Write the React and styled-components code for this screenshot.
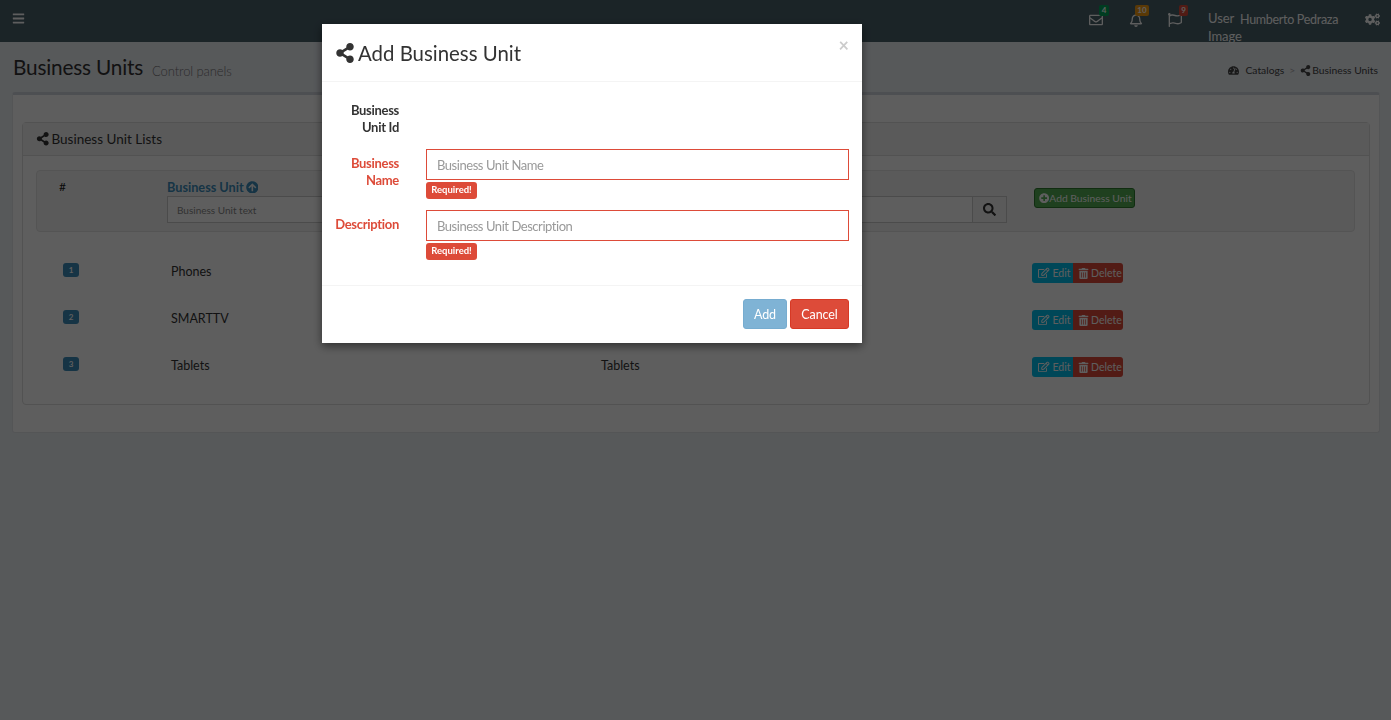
import React from "react";
import styled, { createGlobalStyle } from "styled-components";
import {
  FaBars, FaRegEnvelope, FaRegBell, FaRegFlag, FaCogs, FaTachometerAlt, FaShareAlt,
  FaSearch, FaPlusCircle, FaRegEdit, FaTrashAlt, FaArrowCircleUp,
} from "react-icons/fa";

const Global = createGlobalStyle`
  html, body { margin: 0; padding: 0; height: 100%; }
  body { background: #ecf0f5; font-family: "Lato", "Open Sans", sans-serif; font-size: 14px; color: #333; overflow: hidden; }
  * { box-sizing: border-box; }
`;

const Page = styled.div`height: 720px; display: flex; flex-direction: column;`;

const Header = styled.header`
  height: 42px; flex: none; background: #4a626b; display: flex; align-items: flex-start; color: #fff;
  padding-left: 12px; padding-right: 11px;
`;
const Burger = styled.span`display: flex; margin-top: 12px; font-size: 13px; color: #fff;`;
const HeaderRight = styled.div`margin-left: auto; display: flex; align-items: flex-start;`;
const NotifyIcon = styled.span`
  position: relative; display: flex; width: 14px; font-size: 14px; margin-top: 13px; margin-right: ${p => p.$gap}px; color: #fff;
`;
const Count = styled.span`
  position: absolute; top: -8px; left: ${p => p.$left}px; height: 11px; min-width: ${p => p.$w}px; padding: 0 2px; border-radius: 2px;
  font-size: 8px; line-height: 11px; font-weight: 700; text-align: center; color: #fff; background: ${p => p.$bg};
`;
const UserImage = styled.span`width: 34px; margin-top: 9px; line-height: 18px; font-size: 13px; letter-spacing: -0.1px; color: #fff;`;
const UserName = styled.span`margin-left: -2px; margin-top: 11px; width: 125px; font-size: 12.5px; line-height: 18px; letter-spacing: -0.3px; color: #fff;`;
const Cogs = styled.span`display: flex; margin-top: 12px; font-size: 15px; color: #fff;`;

const ContentHeader = styled.div`height: 50px; flex: none; display: flex; align-items: flex-start; padding: 0 13px;`;
const Title = styled.h1`margin: 11px 0 0; font-size: 20.8px; line-height: 28px; font-weight: 400; color: #333; letter-spacing: -0.2px;`;
const Subtitle = styled.small`margin: 21px 0 0 9px; font-size: 13px; line-height: 16px; font-weight: 300; color: #777; letter-spacing: -0.1px;`;
const Crumbs = styled.div`margin: 21px 0 0 auto; display: flex; align-items: center; gap: 5px; font-size: 10.3px; line-height: 14px; color: #444;`;
const CrumbIcon = styled.span`display: flex; font-size: 11px; margin-right: ${p => p.$gap || 0}px;`;
const CrumbLink = styled.span`display: flex; align-items: center; gap: 1px;`;
const CrumbSep = styled.span`color: #aaa;`;

const Box = styled.section`
  margin: 0 11px 0 12px; height: 341px; flex: none; background: #fff; border: 1px solid #e4e6ea; border-top: 3px solid #d2d6de;
  border-radius: 3px; padding: 27px 9px 0;
`;
const Panel = styled.div`height: 283px; border: 1px solid #ddd; border-radius: 4px;`;
const PanelHeading = styled.div`
  height: 33px; background: #f5f5f5; border-bottom: 1px solid #ddd; padding-left: 13px; display: flex; align-items: center; gap: 2px;
  font-size: 13.5px; color: #333;
`;
const PanelBody = styled.div`padding: 14px 14px 0 13px;`;
const Well = styled.div`
  height: 62px; background: #f5f5f5; border: 1px solid #e3e3e3; border-radius: 4px; display: grid; grid-template-columns: 130px 434px 431px 1fr;
`;
const Hash = styled.div`padding: 7px 0 0 22px; font-weight: 400; font-size: 12px; line-height: 18px; color: #222;`;
const FilterCol = styled.div`display: flex; flex-direction: column; padding-top: 7px;`;
const FilterTitle = styled.div`display: flex; align-items: center; gap: 2px; height: 18px; font-size: 12.7px; font-weight: 700; color: #3c8dbc;`;
const FilterInput = styled.div`
  height: 27px; width: 420px; border: 1px solid #ccc; background: #fff; padding-left: 9px; display: flex; align-items: center;
  font-size: 10px; color: #888;
`;
const SearchGroup = styled.div`display: flex; margin-top: 25px; height: 27px; width: 406px;`;
const SearchField = styled.div`flex: 1; border: 1px solid #ccc; background: #fff;`;
const SearchButton = styled.div`
  width: 34px; border: 1px solid #ccc; border-left: 0; background: #f4f4f4; display: flex; align-items: center; justify-content: center;
  font-size: 13px; color: #333;
`;
const AddCol = styled.div`padding: 17px 0 0 2px;`;
const AddButton = styled.div`
  width: 101px; height: 20px; background: #54ae54; border: 1px solid #2f7a2f; border-radius: 3px; display: flex; align-items: center; padding-left: 4px; gap: 0;
  font-size: 10.3px; white-space: nowrap; color: #fff;
`;
const Rows = styled.div`padding-top: 22px;`;
const Row = styled.div`height: 47px; display: grid; grid-template-columns: 130px 430px 436px 1fr;`;
const Badge = styled.span`
  margin: 9px 0 0 27px; width: 16px; height: 14px; border-radius: 3px; background: #3c8dbc; color: #fff; font-size: 8px; font-weight: 700;
  display: flex; align-items: center; justify-content: center;
`;
const Cell = styled.div`padding: 9px 0 0 5px; font-size: 12.5px; line-height: 18px; color: #333;`;
const Actions = styled.div`padding-top: 9px; display: flex;`;
const EditButton = styled.div`
  height: 20px; width: 41px; background: #00c0ef; border-radius: 3px 0 0 3px; display: flex; align-items: center; padding-left: 6px; gap: 3px; font-size: 10.5px; color: #fff;
  svg { font-size: 11.5px; flex: none; }
`;
const DeleteButton = styled.div`
  height: 20px; width: 50px; background: #dd4b39; border-radius: 0 3px 3px 0; display: flex; align-items: center; padding-left: 5px; gap: 2px; font-size: 10.5px; color: #fff;
  svg { font-size: 11px; flex: none; }
`;

const Backdrop = styled.div`position: fixed; inset: 0; background: rgba(0,0,0,.63); z-index: 10;`;
const Modal = styled.div`
  position: fixed; z-index: 11; top: 24px; left: 322px; width: 540px; height: 319px; background: #fff; box-shadow: 0 3px 9px rgba(0,0,0,.5);
  display: flex; flex-direction: column;
`;
const ModalHeader = styled.div`
  height: 58px; flex: none; border-bottom: 1px solid #f4f4f4; display: flex; align-items: center; padding: 0 13px; position: relative;
`;
const ModalTitle = styled.h4`
  margin: 0; display: flex; align-items: center; gap: 3px; font-size: 20.4px; line-height: 28px; font-weight: 400; color: #333;
  svg { font-size: 20px; flex: none; }
`;
const Close = styled.span`
  position: absolute; top: 10px; right: 13px; font-size: 18px; line-height: 22px; font-weight: 700; color: #ccc;
`;
const ModalBody = styled.div`flex: 1; padding: 14px 13px 0 0;`;
const Field = styled.div`display: grid; grid-template-columns: 77px 1fr; column-gap: 27px; margin-bottom: ${p => p.$mb}px;`;
const Label = styled.label`
  text-align: right; font-weight: 700; font-size: 13px; line-height: 17px; padding: 6px 0 0 10px; letter-spacing: -0.3px; color: ${p => (p.$error ? "#dd4b39" : "#333")};
`;
const Input = styled.div`
  height: 31px; border: 1px solid #dd4b39; display: flex; align-items: center; padding-left: 10px; font-size: 13px; letter-spacing: -0.45px; color: #999;
`;
const Required = styled.span`
  display: block; margin-top: 2px; width: 51px; height: 17px; border-radius: 3px; background: #dd4b39; color: #fff; font-size: 9.5px; font-weight: 700;
  line-height: 16px; text-align: center;
`;
const ModalFooter = styled.div`
  height: 58px; flex: none; border-top: 1px solid #f4f4f4; display: flex; justify-content: flex-end; align-items: flex-start; gap: 3px; padding: 13px 13px 0 0;
`;
const Button = styled.div`
  height: 30px; width: ${p => p.$w}px; border-radius: 3px; display: flex; align-items: center; justify-content: center; font-size: 12.5px; letter-spacing: -0.1px; color: #fff;
  background: ${p => p.$bg}; border: 1px solid ${p => p.$border};
`;

const rows = [
  ["1", "Phones", "Phones"],
  ["2", "SMARTTV", "SMARTTV"],
  ["3", "Tablets", "Tablets"],
];

export default function App() {
  return (
    <Page>
      <Global />
      <Header>
        <Burger><FaBars /></Burger>
        <HeaderRight>
          <NotifyIcon $gap={26}><FaRegEnvelope /><Count $left={10} $w={10} $bg="#00a65a">4</Count></NotifyIcon>
          <NotifyIcon $gap={25}><FaRegBell /><Count $left={6} $w={14} $bg="#f39c12">10</Count></NotifyIcon>
          <NotifyIcon $gap={26}><FaRegFlag /><Count $left={11} $w={9} $bg="#dd4b39">9</Count></NotifyIcon>
          <UserImage>User Image</UserImage>
          <UserName>Humberto Pedraza</UserName>
          <Cogs><FaCogs /></Cogs>
        </HeaderRight>
      </Header>
      <ContentHeader>
        <Title>Business Units</Title>
        <Subtitle>Control panels</Subtitle>
        <Crumbs>
          <CrumbLink><CrumbIcon $gap={5}><FaTachometerAlt /></CrumbIcon>Catalogs</CrumbLink>
          <CrumbSep>&gt;</CrumbSep>
          <CrumbLink><CrumbIcon><FaShareAlt /></CrumbIcon>Business Units</CrumbLink>
        </Crumbs>
      </ContentHeader>
      <Box>
        <Panel>
          <PanelHeading><FaShareAlt />Business Unit Lists</PanelHeading>
          <PanelBody>
            <Well>
              <Hash>#</Hash>
              <FilterCol>
                <FilterTitle>Business Unit <FaArrowCircleUp /></FilterTitle>
                <FilterInput>Business Unit text</FilterInput>
              </FilterCol>
              <SearchGroup>
                <SearchField />
                <SearchButton><FaSearch /></SearchButton>
              </SearchGroup>
              <AddCol>
                <AddButton><FaPlusCircle />Add Business Unit</AddButton>
              </AddCol>
            </Well>
            <Rows>
              {rows.map(([n, name, desc]) => (
                <Row key={n}>
                  <Badge>{n}</Badge>
                  <Cell>{name}</Cell>
                  <Cell>{desc}</Cell>
                  <Actions>
                    <EditButton><FaRegEdit />Edit</EditButton>
                    <DeleteButton><FaTrashAlt />Delete</DeleteButton>
                  </Actions>
                </Row>
              ))}
            </Rows>
          </PanelBody>
        </Panel>
      </Box>
      <Backdrop />
      <Modal>
        <ModalHeader>
          <ModalTitle><FaShareAlt />Add Business Unit</ModalTitle>
          <Close>×</Close>
        </ModalHeader>
        <ModalBody>
          <Field $mb={13}>
            <Label>Business Unit Id</Label>
            <div />
          </Field>
          <Field $mb={11}>
            <Label $error>Business Name</Label>
            <div>
              <Input>Business Unit Name</Input>
              <Required>Required!</Required>
            </div>
          </Field>
          <Field $mb={0}>
            <Label $error>Description</Label>
            <div>
              <Input>Business Unit Description</Input>
              <Required>Required!</Required>
            </div>
          </Field>
        </ModalBody>
        <ModalFooter>
          <Button $w={44} $bg="#7fb3d5" $border="#76acd0">Add</Button>
          <Button $w={59} $bg="#dd4b39" $border="#d73925">Cancel</Button>
        </ModalFooter>
      </Modal>
    </Page>
  );
}
